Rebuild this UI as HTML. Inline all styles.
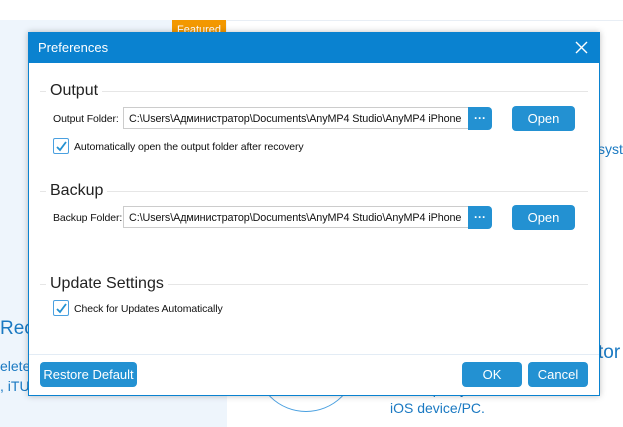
<!DOCTYPE html><html><head><style>
body{margin:0;width:623px;height:427px;position:relative;overflow:hidden;background:#fff;font-family:"Liberation Sans",sans-serif}
.a{position:absolute}
.lbl{font-size:10.5px;color:#111;letter-spacing:-0.1px}
.inp{position:absolute;height:22px;border:1px solid #ccc;background:#fff;font-size:10.8px;letter-spacing:-0.1px;line-height:22px;padding-left:5px;box-sizing:border-box;white-space:nowrap;overflow:hidden;color:#111}
.btn{position:absolute;background:#2391d2;color:#fff;border-radius:4px;font-size:13px;text-align:center}
.sec{position:absolute;font-size:16px;color:#222;background:#fff;padding:0 4px}
.line{position:absolute;height:1px;background:#e6e6e6}
.cb{position:absolute;width:14px;height:14px;border:1px solid #4aa0e0;border-radius:2px;background:#fff}
.dots{line-height:22px;font-weight:bold;font-size:12px}
</style></head><body>
<div class="a" style="left:0;top:20px;width:227px;height:407px;background:#eef5fc"></div>
<div class="a" style="left:227px;top:20px;width:396px;height:1px;background:#e8eef5"></div>
<div class="a" style="left:172px;top:20px;width:54px;height:14px;background:#f39800;color:#fff;font-size:11px;text-align:center;line-height:20px;overflow:hidden">Featured</div>
<div class="a" style="left:0;top:318px;color:#1a79c2;font-size:19px">Rec</div>
<div class="a" style="left:0;top:356px;color:#1a79c2;font-size:14px;line-height:20px">elete<br>, iTU</div>
<div class="a" style="left:598px;top:141px;color:#1a79c2;font-size:14px">syst</div>
<div class="a" style="left:598px;top:342px;color:#1a79c2;font-size:19px">tor</div>
<div class="a" style="left:390px;top:380px;color:#1a79c2;font-size:14px;line-height:19px">Back up any iPhone/iPad data<br>iOS device/PC.</div>
<div class="a" style="left:255px;top:310px;width:100px;height:100px;border:1px solid #4aa0e0;border-radius:50%"></div>
<div class="a" style="left:28px;top:32px;width:570px;height:362px;border:1px solid #0a82d0;background:#fff;box-shadow:0 0 6px rgba(0,0,0,.25)"></div>
<div class="a" style="left:28px;top:32px;width:572px;height:31px;background:#0a82d0"></div>
<div class="a" style="left:38px;top:40px;color:#fff;font-size:13px">Preferences</div>
<svg class="a" style="left:575px;top:41px" width="13" height="13"><path d="M1 1L12 12M12 1L1 12" stroke="#fff" stroke-width="1.4"/></svg>
<div class="line" style="left:40px;top:91px;width:548px"></div><div class="sec" style="left:46px;top:82px">Output</div>
<div class="a lbl" style="left:53px;top:113px">Output Folder:</div>
<div class="inp" style="left:123px;top:107px;width:346px">C:\Users\Администратор\Documents\AnyMP4 Studio\AnyMP4 iPhone</div>
<div class="btn dots" style="left:468px;top:107px;width:24px;height:23px;border-radius:0 4px 4px 0">···</div>
<div class="btn" style="left:512px;top:106px;width:63px;height:25px;line-height:25px">Open</div>
<div class="cb" style="left:53px;top:138px"></div><svg class="a" style="left:55px;top:140px" width="13" height="13"><path d="M2 7L5 10L11 2" stroke="#2391d2" stroke-width="1.8" fill="none"/></svg>
<div class="a lbl" style="left:74px;top:141px">Automatically open the output folder after recovery</div>
<div class="line" style="left:40px;top:191px;width:548px"></div><div class="sec" style="left:46px;top:182px">Backup</div>
<div class="a lbl" style="left:53px;top:212px">Backup Folder:</div>
<div class="inp" style="left:123px;top:206px;width:346px">C:\Users\Администратор\Documents\AnyMP4 Studio\AnyMP4 iPhone</div>
<div class="btn dots" style="left:468px;top:206px;width:24px;height:23px;border-radius:0 4px 4px 0">···</div>
<div class="btn" style="left:512px;top:205px;width:63px;height:25px;line-height:25px">Open</div>
<div class="line" style="left:40px;top:284px;width:548px"></div><div class="sec" style="left:46px;top:275px">Update Settings</div>
<div class="cb" style="left:53px;top:300px"></div><svg class="a" style="left:55px;top:302px" width="13" height="13"><path d="M2 7L5 10L11 2" stroke="#2391d2" stroke-width="1.8" fill="none"/></svg>
<div class="a lbl" style="left:74px;top:303px">Check for Updates Automatically</div>
<div class="a" style="left:29px;top:354px;width:570px;height:1px;background:#e3ecf5"></div>
<div class="btn" style="left:40px;top:362px;width:97px;height:25px;line-height:25px">Restore Default</div>
<div class="btn" style="left:462px;top:362px;width:60px;height:25px;line-height:25px">OK</div>
<div class="btn" style="left:528px;top:362px;width:60px;height:25px;line-height:25px">Cancel</div>
</body></html>
